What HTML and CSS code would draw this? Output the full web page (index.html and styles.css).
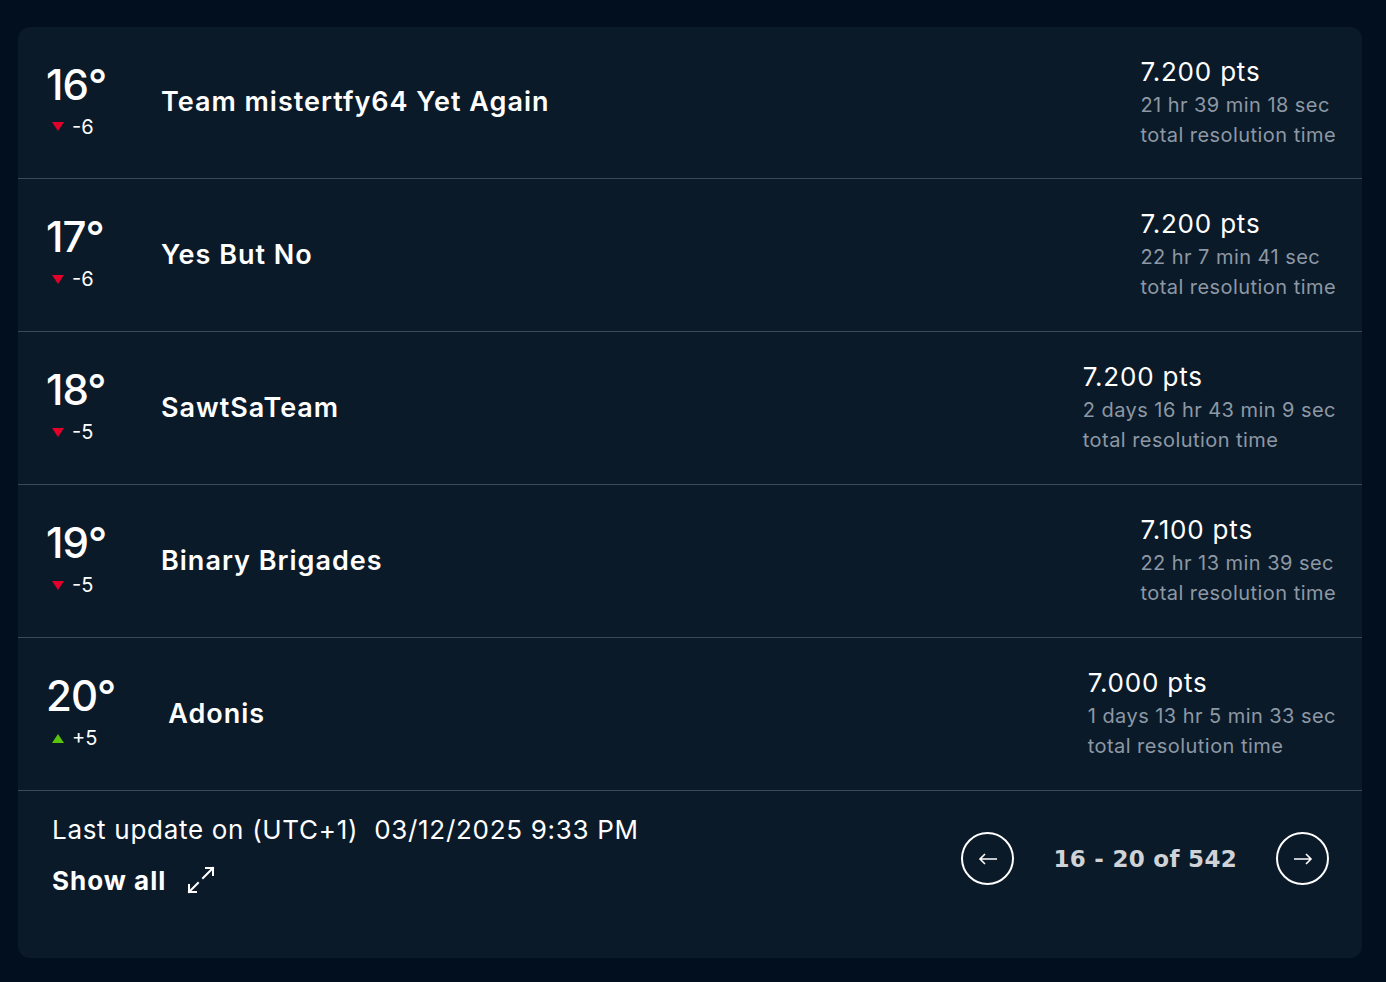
FILE: index.html
```html
<!DOCTYPE html>
<html>
<head>
<meta charset="utf-8">
<link rel="stylesheet" href="styles.css">
</head>
<body>
<div class="card">
  <div class="row">
    <div class="rank"><div class="pos">16°</div><div class="delta"><span class="tri down"></span>-6</div></div>
    <div class="name">Team mistertfy64 Yet Again</div>
    <div class="score"><div class="pts">7.200 pts</div><div class="time">21 hr 39 min 18 sec</div><div class="time">total resolution time</div></div>
  </div>
  <div class="row">
    <div class="rank"><div class="pos">17°</div><div class="delta"><span class="tri down"></span>-6</div></div>
    <div class="name">Yes But No</div>
    <div class="score"><div class="pts">7.200 pts</div><div class="time">22 hr 7 min 41 sec</div><div class="time">total resolution time</div></div>
  </div>
  <div class="row">
    <div class="rank"><div class="pos">18°</div><div class="delta"><span class="tri down"></span>-5</div></div>
    <div class="name">SawtSaTeam</div>
    <div class="score"><div class="pts">7.200 pts</div><div class="time">2 days 16 hr 43 min 9 sec</div><div class="time">total resolution time</div></div>
  </div>
  <div class="row">
    <div class="rank"><div class="pos">19°</div><div class="delta"><span class="tri down"></span>-5</div></div>
    <div class="name">Binary Brigades</div>
    <div class="score"><div class="pts">7.100 pts</div><div class="time">22 hr 13 min 39 sec</div><div class="time">total resolution time</div></div>
  </div>
  <div class="row">
    <div class="rank"><div class="pos">20°</div><div class="delta"><span class="tri up"></span>+5</div></div>
    <div class="name">Adonis</div>
    <div class="score"><div class="pts">7.000 pts</div><div class="time">1 days 13 hr 5 min 33 sec</div><div class="time">total resolution time</div></div>
  </div>
  <div class="footer">
    <div class="info">
      <div class="updated">Last update on (UTC+1)&nbsp; 03/12/2025 9:33 PM</div>
      <div class="showall">Show all
        <svg class="expand" width="30" height="30" viewBox="0 0 30 30" fill="none" stroke="#fff" stroke-width="2" stroke-linecap="square">
          <path d="M17 13 L27 3 M20 3 H27 V10"/>
          <path d="M12 18 L3 27 M3 20 V27 H10"/>
        </svg>
      </div>
    </div>
    <div class="pager">
      <button class="circ" aria-label="previous"><svg width="20" height="12" viewBox="0 0 20 12" fill="none" stroke="#fff" stroke-width="1.6"><path d="M19 6 H2 M7 1 L2 6 L7 11"/></svg></button>
      <span class="range">16 - 20 of 542</span>
      <button class="circ" aria-label="next"><svg width="20" height="12" viewBox="0 0 20 12" fill="none" stroke="#fff" stroke-width="1.6"><path d="M1 6 H18 M13 1 L18 6 L13 11"/></svg></button>
    </div>
  </div>
</div>
</body>
</html>
```
FILE: styles.css
```css
html, body {
  margin: 0;
  padding: 0;
  background: #010f1f;
}
body {
  padding: 27px 24px 24px 18px;
  font-family: Inter, "Noto Sans", sans-serif;
  color: #fff;
}
.card {
  background: #0b1a29;
  border-radius: 12px;
  width: 1344px;
  height: 931px;
  display: flex;
  flex-direction: column;
}
.row {
  height: 152px;
  border-bottom: 1px solid #3d4955;
  display: flex;
  align-items: center;
  padding: 0 26px 0 28px;
  gap: 53px;
}
.row:first-child { height: 151px; }
.rank {
  display: flex;
  flex-direction: column;
  min-width: 62px;
  padding-bottom: 4px;
}
.pos {
  font-size: 42px;
  font-weight: 500;
  line-height: 44px;
  letter-spacing: -1px;
  margin-bottom: 8px;
}
.delta {
  font-size: 20px;
  line-height: 24px;
  display: flex;
  align-items: center;
  padding-left: 6px;
}
.tri {
  width: 0;
  height: 0;
  border-left: 6px solid transparent;
  border-right: 6px solid transparent;
  margin-right: 8px;
}
.tri.down { border-top: 9px solid #e2002b; }
.tri.up { border-bottom: 9px solid #59c40c; }
.name {
  flex: 1;
  font-size: 27px;
  font-weight: 600;
  letter-spacing: 1px;
  padding-bottom: 2px;
}
.score {
  display: flex;
  flex-direction: column;
}
.pts {
  font-size: 26px;
  line-height: 32px;
  letter-spacing: 0.8px;
  margin-bottom: 2px;
}
.time {
  font-size: 20px;
  line-height: 30px;
  letter-spacing: 0.45px;
  color: #8d98a4;
}
.footer {
  flex: 1;
  display: flex;
  justify-content: space-between;
  align-items: flex-start;
  padding: 22px 33px 0 34px;
}
.updated {
  font-size: 26px;
  line-height: 34px;
  letter-spacing: 0.7px;
}
.showall {
  margin-top: 18px;
  font-size: 26px;
  font-weight: 700;
  letter-spacing: 1px;
  display: flex;
  align-items: center;
  gap: 20px;
}
.expand { margin-top: -2px; }
.pager {
  display: flex;
  align-items: center;
  margin-top: 19px;
  gap: 39px;
}
.circ {
  width: 53px;
  height: 53px;
  border-radius: 50%;
  border: 2px solid #fff;
  background: transparent;
  display: flex;
  align-items: center;
  justify-content: center;
  padding: 0;
}
.range {
  font-family: "DejaVu Sans", sans-serif;
  font-weight: 700;
  font-size: 23px;
  letter-spacing: 0.3px;
  color: #cfd3d8;
}
```
